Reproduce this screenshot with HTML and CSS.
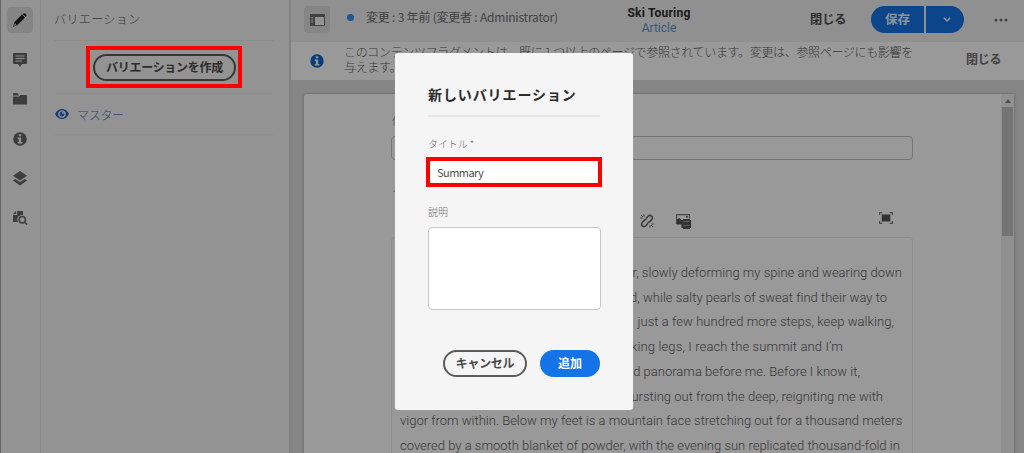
FILE: index.html
```html
<!DOCTYPE html>
<html lang="ja">
<head>
<meta charset="utf-8">
<title>Ski Touring</title>
<link rel="stylesheet" href="styles.css">
</head>
<body>
<div class="app">
  <nav class="rail">
    <span class="rail-item active"><svg width="14" height="14" viewBox="0 0 14 14"><path d="M0 14l1.500-5L9 1.500l3 3L4.500 12z M9.800.8Q11-.5 12.500.8l.6.6q1 1.200-.2 2.300l-.4.400-3-3z"/><path class="tip" d="M.9 13.100l1-2.800 1.600 1.700z"/></svg></span>
    <span class="rail-item"><svg width="14" height="14" viewBox="0 0 14 14"><path d="M1 0h12q1 0 1 1v9q0 1-1 1H9l-2 3-2-3H1q-1 0-1-1V1q0-1 1-1z"/><path class="cut" d="M2.500 3h9M2.500 5.500h9M2.500 8h6.500"/></svg></span>
    <span class="rail-item"><svg width="14" height="12" viewBox="0 0 14 12"><path d="M0 2.500V1q0-1 1-1h3.500l1.500 2.500z M0 3.500h6L7.500 2H13q1 0 1 1v8.500H0z"/></svg></span>
    <span class="rail-item"><svg width="14" height="14" viewBox="0 0 14 14"><circle cx="7" cy="7" r="6.800"/><path class="hole" d="M5.800 2.300h2.400v2H5.800z M4.700 5.600h3.500v4.300h1.200v1.500H4.700V9.900h1.100V7.100H4.700z"/></svg></span>
    <span class="rail-item"><svg width="14" height="15" viewBox="0 0 14 15"><path d="M7 0l7 4.700-7 4.700-7-4.700z M2.200 7.900L7 11l4.800-3.100L14 9.600l-7 4.900-7-4.900z"/></svg></span>
    <span class="rail-item"><svg width="15" height="14" viewBox="0 0 15 14"><path d="M4 0h6v4.200a4.600 4.600 0 0 0-5.200 6.700H0V4h4z M3 0v3H0z"/><path class="lens" d="M11.500 11l2.700 2.500"/><circle class="lens" cx="9.300" cy="8.700" r="3.200"/></svg></span>
  </nav>
  <aside class="panel">
    <h2 class="panel-title">バリエーション</h2>
    <div class="create-row"><button class="create"><span class="create-label">バリエーションを作成</span></button></div>
    <div class="master"><svg width="14" height="10" viewBox="0 0 14 10"><path fill-rule="evenodd" d="M7 0Q11.500 0 14 5 11.500 10 7 10T0 5Q2.500 0 7 0z M7 1.200a3.800 3.800 0 1 0 .01 0z"/><circle cx="7" cy="5" r="2.400"/><circle class="eye-glint" cx="7.900" cy="3.900" r="1"/></svg><span class="master-label">マスター</span></div>
  </aside>
  <main class="main">
    <header class="topbar">
      <span class="toggle"><svg width="15" height="12" viewBox="0 0 15 12"><path d="M1 0h13q1 0 1 1v10q0 1-1 1H1q-1 0-1-1V1q0-1 1-1z"/><path class="hole" d="M5 3h9v8H5z M1.200 3.200h2v1h-2z M1.200 5.400h2v1h-2z M1.200 7.600h2v1h-2z"/></svg></span>
      <i class="dot"></i>
      <span class="status">変更 : 3 年前 (変更者 : Administrator)</span>
      <div class="heading"><b class="heading-name">Ski Touring</b><a class="heading-type">Article</a></div>
      <b class="close">閉じる</b>
      <div class="save"><b class="save-main">保存</b><span class="save-more"><svg width="8" height="5" viewBox="0 0 8 5"><path d="M.8.8L4 4 7.200.8"/></svg></span></div>
      <svg class="more" width="14" height="4" viewBox="0 0 14 4"><circle cx="2" cy="2" r="1.500"/><circle cx="7" cy="2" r="1.500"/><circle cx="12" cy="2" r="1.500"/></svg>
    </header>
    <section class="notice">
      <svg class="notice-icon" width="14" height="14" viewBox="0 0 14 14"><circle cx="7" cy="7" r="6.700"/><path class="hole" d="M5.800 2.300h2.400v2H5.800z M4.700 5.600h3.500v4.300h1.200v1.500H4.700V9.900h1.100V7.100H4.700z"/></svg>
      <p class="notice-text">このコンテンツフラグメントは、既に 1 つ以上のページで参照されています。変更は、参照ページにも影響を<br>与えます。</p>
      <b class="notice-close">閉じる</b>
    </section>
    <div class="canvas">
      <article class="doc">
        <div class="fields">
          <span class="label first">件名</span>
          <div class="input"></div>
          <span class="label second">メイン</span>
          <div class="tools">
            <svg class="unlink" width="14" height="14" viewBox="0 0 14 14"><path d="M6 4.700l2.100-2.400q1.600-1.600 3.500-.2 1.600 1.700.1 3.500L9.500 7.900q-1 .8-2 .5M8 9.300l-2.100 2.400q-1.600 1.600-3.500.2-1.600-1.700-.1-3.500l2.200-2.300q1-.8 2-.5"/><path class="rays" d="M4 .4v2.300M1 1l2 2M.3 4h2.300M10 11.300v2.300M11.200 11l2 2M11.400 10h2.300"/></svg>
            <svg class="media" width="16" height="15" viewBox="0 0 16 15"><path class="frame" d="M.6 10V.6h12.800v3.900"/><path d="M.6 10V5.500L3.500 4l2.500 2.500v4H.6z M10 2h1.800v1.600H10z M7 5h7v1h1v8h-1v1H7v-1H5.500V6H7z"/><path class="cut-soft" d="M7.500 7.500h6M7.500 11.500h6"/></svg>
            <svg class="full" width="14" height="12" viewBox="0 0 14 12"><path d="M2.700 2.500h8.600v7H2.700z"/><path class="frame" d="M.6 3V.6h2.600M10.800.6h2.600V3M13.400 9v2.400h-2.600M3.200 11.400H.6V9"/></svg>
          </div>
          <div class="editor">
            <p class="line l1">shoulder, slowly deforming my spine and wearing down</p>
            <p class="line l2">forehead, while salty pearls of sweat find their way to</p>
            <p class="line l3">just a few hundred more steps, keep walking,</p>
            <p class="line l4">shaking legs, I reach the summit and I’m</p>
            <p class="line l5">and panorama before me. Before I know it,</p>
            <p class="line l6">bursting out from the deep, reigniting me with</p>
            <p class="line l7">vigor from within. Below my feet is a mountain face stretching out for a thousand meters</p>
            <p class="line l8">covered by a smooth blanket of powder, with the evening sun replicated thousand-fold in</p>
          </div>
        </div>
        <div class="scroll"><i class="arrow"></i><i class="thumb"></i></div>
      </article>
    </div>
  </main>
</div>
<div class="overlay"></div>
<div class="mark"></div>
<section class="dialog">
  <h1 class="dialog-title">新しいバリエーション</h1>
  <span class="dialog-label title-label">タイトル *</span>
  <div class="title-input">Summary</div>
  <span class="dialog-label">説明</span>
  <div class="textarea"></div>
  <div class="actions"><button class="cancel"><span class="cancel-label">キャンセル</span></button><button class="add">追加</button></div>
</section>
</body>
</html>
```

FILE: styles.css
```css
* { box-sizing: border-box; }
body { margin: 0; width: 1024px; height: 453px; overflow: hidden; position: relative; font-family: "Noto Sans CJK JP", sans-serif; font-size: 12px; color: #6e6e6e; }
p, h1, h2 { margin: 0; }
svg { display: block; flex: none; }
button { font-family: inherit; margin: 0; padding: 0; }
.app { display: flex; width: 1024px; height: 453px; background: #f5f5f5; }
.overlay { position: absolute; inset: 0; background: rgba(0,0,0,.4); }

.rail { width: 41px; flex: none; border-left: 1px solid #aaa; border-right: 1px solid #e5e5e5; padding: 7px 0 0 6px; display: flex; flex-direction: column; gap: 13.700px; }
.rail-item { width: 26px; height: 26px; border-radius: 4px; display: flex; align-items: center; justify-content: center; fill: #666; }
.active { background: #dedede; fill: #222; }
.tip { fill: #ddd; }
.cut { stroke: #f5f5f5; stroke-width: 1; fill: none; }
.cut-soft { stroke: #bbb; stroke-width: .7; fill: none; }
.hole { fill: #f5f5f5; }
.lens { fill: none; stroke: #666; stroke-width: 1.500; }

.panel { width: 250px; flex: none; padding: 0 15px 0 13px; border-right: 2px solid #d9d9d9; }
.panel-title { height: 41px; line-height: 38px; font-size: 12px; font-weight: 300; letter-spacing: .4px; border-bottom: 1px solid #e9e9e9; color: #555; }
.create-row { height: 53px; border-bottom: 1px solid #efefef; padding: 13px 0 0 39px; }
.create { display: block; width: 143px; height: 27px; border: 2px solid #5c5c5c; border-radius: 14px; background: none; color: #4b4b4b; font-size: 12px; font-weight: 700; line-height: 19px; padding-bottom: 2px; white-space: nowrap; }
.create-label { letter-spacing: -.3px; }
.master { height: 41px; border-bottom: 1px solid #efefef; display: flex; align-items: center; gap: 9px; color: #4b7cc4; fill: #2566c0; font-size: 12px; font-weight: 300; }
.master svg { margin-left: 1px; margin-right: -1px; }
.master-label { letter-spacing: -.3px; }
.eye-glint { fill: #f5f5f5; }
.mark { position: absolute; left: 86px; top: 46px; width: 156px; height: 42px; border: 4px solid #f00; }

.main { flex: 1; min-width: 0; display: flex; flex-direction: column; }
.topbar { height: 42px; flex: none; display: flex; align-items: flex-start; padding: 6px 0 0 13px; background: #f1f1f1; }
.toggle { width: 26px; height: 27px; background: #dedede; border-radius: 4px; display: flex; align-items: center; justify-content: center; fill: #6e6e6e; }
.dot { width: 7px; height: 7px; border-radius: 50%; background: #378ef0; margin: 8px 12px 0 17px; }
.status { width: 237px; line-height: 22px; font-size: 12px; font-weight: 400; letter-spacing: -.210px; white-space: nowrap; }
.heading { width: 110px; margin-left: 1px; display: flex; flex-direction: column; align-items: center; }
.heading-name { font: 700 12px/14px Roboto, sans-serif; letter-spacing: .2px; color: #2c2c2c; }
.heading-type { font: 400 12px/16px Roboto, sans-serif; color: #5b8fd0; }
.close { margin-left: 96px; width: 61px; line-height: 26px; color: #4b4b4b; font-size: 12.200px; }
.save { display: flex; gap: 2px; color: #f5f5f5; }
.save-main { width: 53px; height: 27px; line-height: 26px; padding-left: 14px; border-radius: 14px 0 0 14px; background: #1473e6; font-size: 12.500px; }
.save-more { width: 38px; height: 27px; border-radius: 0 14px 14px 0; background: #1473e6; display: flex; justify-content: center; align-items: center; padding-left: 3px; stroke: #fff; stroke-width: 1.400; fill: none; }
.more { margin: 12px 0 0 30px; fill: #6e6e6e; }

.notice { height: 38px; flex: none; background: #fff; display: flex; padding-left: 19px; }
.notice-icon { margin: 12px 20px 0 0; fill: #0d66d0; }
.notice-text { width: 622px; font-size: 12px; font-weight: 300; line-height: 15px; padding-top: 2px; letter-spacing: -.330px; white-space: nowrap; color: #5c5c5c; }
.notice-close { line-height: 33px; color: #6e6e6e; font-size: 12px; letter-spacing: -.2px; }
.canvas { flex: 1; padding: 14px 10px 0 13px; background: #dfdfdf; overflow: hidden; }
.doc { height: 370px; display: flex; justify-content: space-between; background: #fff; border-radius: 3px 3px 0 0; box-shadow: 0 0 3px rgba(0,0,0,.3); }
.fields { margin-left: 87px; width: 522px; display: flex; flex-direction: column; }
.label { font-size: 10px; font-weight: 300; line-height: 16px; }
.first { margin: 19px 0 7px 1px; }
.second { margin: 20px 0 0 1px; }
.input { height: 27px; border: 1px solid #c4c4c4; border-radius: 4px; }
.tools { height: 38px; margin-top: 5px; padding: 13px 20px 0 249px; display: flex; align-items: flex-start; fill: #555; }
.unlink { fill: none; stroke: #666; stroke-width: 1.600; }
.rays { stroke-width: 1; }
.media { margin-left: 22px; }
.frame { fill: none; stroke: #777; stroke-width: 1.100; }
.full { margin: -2px 0 0 auto; }
.editor { height: 250px; border: 1px solid #eaeaea; border-radius: 4px; padding: 23px 0 0 8px; display: flex; flex-direction: column; }
.line { width: 503px; font: 300 13px/24.750px Roboto, sans-serif; letter-spacing: .010px; text-align: right; white-space: nowrap; color: #5c5c5c; }
.l1 { padding-right: 1px; }
.l2 { padding-right: 16px; }
.l3 { padding-right: 9px; letter-spacing: .060px; }
.l4 { padding-right: 60px; letter-spacing: .120px; }
.l5 { padding-right: 43px; }
.l6 { padding-right: 20px; }
.l7, .l8 { text-align: left; letter-spacing: 0; }
.scroll { width: 13px; background: #f0f0f0; display: flex; flex-direction: column; align-items: center; }
.arrow { border: 3px solid transparent; border-top: 0; border-bottom: 4px solid #808080; margin: 5px 0 4px; }
.thumb { width: 11px; height: 129px; background: #c1c1c1; }

.dialog { position: absolute; left: 395px; top: 53px; width: 238px; height: 357px; background: #f5f5f5; border-radius: 3px; padding: 30px 33px; display: flex; flex-direction: column; }
.dialog-title { height: 34px; border-bottom: 2px solid #e5e5e5; font-size: 14px; line-height: 23px; font-weight: 700; color: #2c2c2c; letter-spacing: .9px; white-space: nowrap; }
.dialog-label { height: 40px; padding-top: 17px; font-size: 10px; font-weight: 300; line-height: 16px; color: #6e6e6e; }
.title-label { padding-top: 19px; letter-spacing: -.1px; }
.title-input { width: 176px; height: 30px; margin-left: -2px; border: 4px solid #f00; background: #fff; padding-left: 7px; font-size: 11px; letter-spacing: -.550px; line-height: 23px; color: #4b4b4b; }
.textarea { width: 173px; height: 83px; flex: none; background: #fff; border: 1px solid #c8c8c8; border-radius: 4px; }
.actions { margin: 40px 0 0 15px; display: flex; gap: 13px; }
.cancel { width: 84px; height: 27px; border: 2px solid #5c5c5c; border-radius: 14px; background: none; color: #4b4b4b; font-size: 12px; font-weight: 700; line-height: 19px; padding-bottom: 2px; }
.cancel-label { letter-spacing: -.3px; }
.add { width: 60px; height: 27px; border: 0; border-radius: 14px; background: #1473e6; color: #fff; font-size: 12px; font-weight: 700; line-height: 23px; padding-bottom: 2px; }
```
